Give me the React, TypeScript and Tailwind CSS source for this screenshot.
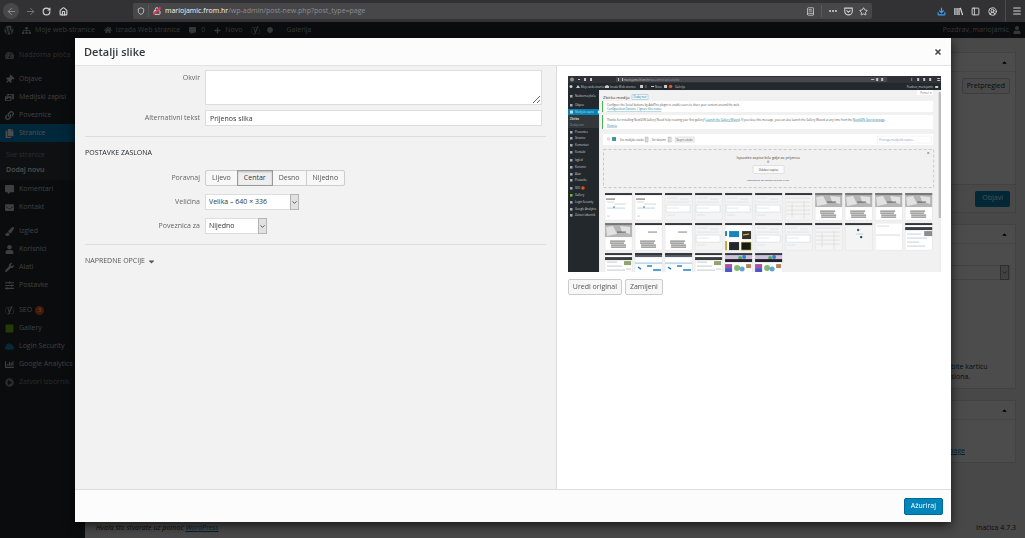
import React from "react";
import type { ReactNode } from "react";
import {
  ArrowLeft, ArrowRight, RotateCw, House, Shield, LockOpen, Ellipsis, Star, Download,
  Menu, PanelLeft, CircleUserRound, BookText, ChevronDown, X,
} from "lucide-react";
import {
  FaWordpress, FaHome, FaPlus, FaCommentAlt, FaTachometerAlt, FaThumbtack, FaPhotoVideo, FaLink, FaCopy,
  FaEnvelope, FaPaintBrush, FaUser, FaWrench, FaSlidersH, FaYoast, FaSquare, FaCloud, FaChartBar,
  FaPlayCircle, FaCircle, FaSitemap, FaCaretUp, FaCaretDown,
} from "react-icons/fa";

type Item = { label: string; icon: ReactNode; badge?: string };

function BrowserBar() {
  return (
    <header className="flex h-[22px] items-center bg-[#323234] px-[3px] text-[#d4d4d6]">
      <nav className="flex w-[130px] items-center gap-[6px]">
        <button aria-label="Natrag" className="flex size-4 items-center justify-center rounded-full bg-[#48484a] text-[#8f8f91]">
          <ArrowLeft size={11} />
        </button>
        <button aria-label="Naprijed" className="text-[#77777a]"><ArrowRight size={11} /></button>
        <button aria-label="Osvježi" className="mr-0.5"><RotateCw size={9} strokeWidth={3} /></button>
        <button aria-label="Početna"><House size={9} strokeWidth={3} /></button>
      </nav>
      <div className="flex h-4 min-w-0 flex-1 items-center rounded-[2px] bg-[#474749] px-1">
        <Shield size={8} strokeWidth={2.5} />
        <span className="mx-[3px] h-3 w-px bg-[#59595b]" />
        <span className="relative mr-1 flex size-[9px] items-center justify-center">
          <LockOpen size={8} strokeWidth={3} />
          <span className="absolute h-0.5 w-[10px] -rotate-45 bg-[#e0355a]" />
        </span>
        <p className="flex-1 truncate text-[7px] leading-4 text-[#8d8d8f]">
          <span className="text-[#f3f3f4]">mariojamic.from.hr</span>/wp-admin/post-new.php?post_type=page
        </p>
        <BookText size={9} strokeWidth={2} />
        <span className="ml-[6px] mr-[6px] h-3 w-px bg-[#59595b]" />
        <Ellipsis size={10} strokeWidth={3} />
        <svg viewBox="0 0 12 12" className="ml-[6px] size-[9px]" fill="none" stroke="currentColor" strokeWidth="1.4">
          <path d="M1 1.500h10v4a5 5 0 0 1-10 0zM3.500 4.500L6 7l2.500-2.500" />
        </svg>
        <Star size={9} strokeWidth={2.5} className="ml-[6px]" />
      </div>
      <div className="flex w-[150px] items-center justify-end gap-2">
        <Download size={9} strokeWidth={3} className="text-[#3f9ef5]" />
        <svg viewBox="0 0 10 10" className="size-[9px]" stroke="currentColor" strokeWidth="1.4" fill="none">
          <path d="M1 1v8M3.4 1v8M5.6 1v8M7 1l2.6 8" />
        </svg>
        <PanelLeft size={9} strokeWidth={2.5} />
        <CircleUserRound size={9} strokeWidth={2.5} />
        <span className="-mr-0.5 h-[22px] w-px bg-[#4c4c4e]" />
        <Menu size={10} strokeWidth={2.5} />
      </div>
    </header>
  );
}

function AdminBar() {
  return (
    <div className="flex h-4 items-center bg-[#23282d] px-1 text-[7px] leading-4 text-[#b4b9be]">
      <FaWordpress size={10} />
      <a href="#sites" className="ml-2 flex items-center gap-1"><FaSitemap size={9} />Moje web-stranice</a>
      <a href="#site" className="ml-[9px] flex items-center gap-1"><FaHome size={8} />Izrada Web stranice</a>
      <a href="#comments" className="ml-[9px] flex items-center gap-[5px]"><FaCommentAlt size={7} />0</a>
      <a href="#new" className="ml-[9px] flex items-center gap-1"><FaPlus size={7} />Novo</a>
      <FaYoast size={9} className="ml-[9px]" />
      <FaCircle size={6} className="ml-[7px]" />
      <a href="#gallery" className="ml-[13px]">Galerija</a>
      <a href="#profile" className="ml-auto flex items-center gap-1">Pozdrav, mariojamic <FaUser size={8} /></a>
    </div>
  );
}

const group1: Item[] = [
  { label: "Objave", icon: <FaThumbtack className="rotate-45" /> },
  { label: "Medijski zapisi", icon: <FaPhotoVideo /> },
  { label: "Poveznice", icon: <FaLink /> },
];
const group2: Item[] = [
  { label: "Komentari", icon: <FaCommentAlt /> },
  { label: "Kontakt", icon: <FaEnvelope /> },
];
const group3: Item[] = [
  { label: "Izgled", icon: <FaPaintBrush /> },
  { label: "Korisnici", icon: <FaUser /> },
  { label: "Alati", icon: <FaWrench /> },
  { label: "Postavke", icon: <FaSlidersH /> },
];
const group4: Item[] = [
  { label: "SEO", icon: <FaYoast />, badge: "3" },
  { label: "Gallery", icon: <FaSquare className="text-[#7ec225]" /> },
  { label: "Login Security", icon: <FaCloud className="text-[#118ab5]" /> },
  { label: "Google Analytics", icon: <FaChartBar /> },
];

function MenuItems({ items, className = "" }: { items: Item[]; className?: string }) {
  return (
    <ul className={className}>
      {items.map((it) => (
        <li key={it.label}>
          <a href="#menu" className="flex h-[18px] items-center gap-[5px] whitespace-nowrap pl-[5px]">
            <span className="flex w-[9px] justify-center text-[9px]">{it.icon}</span>
            {it.label}
            {it.badge && (
              <span className="-ml-0.5 flex size-[9px] items-center justify-center rounded-full bg-[#f0591a] text-[6px] text-white">
                {it.badge}
              </span>
            )}
          </a>
        </li>
      ))}
    </ul>
  );
}

function Sidebar() {
  return (
    <nav className="w-[85px] shrink-0 bg-[#23282d] pt-2 text-[7px] text-[#d0d3d6]">
      <MenuItems items={[{ label: "Nadzorna ploča", icon: <FaTachometerAlt /> }]} className="text-[#999da1]" />
      <MenuItems items={group1} className="mt-[6px]" />
      <a href="#pages" className="flex h-[18px] items-center gap-[5px] bg-[#0085c4] pl-[5px] text-white">
        <span className="flex w-[9px] justify-center text-[9px]"><FaCopy /></span>Stranice
      </a>
      <div className="bg-[#32373c] pb-[3px] pl-[6px] pt-[5px] leading-[15px]">
        <a href="#all" className="block text-[#92979c]">Sve stranice</a>
        <a href="#add" className="block font-semibold text-white">Dodaj novu</a>
      </div>
      <MenuItems items={group2} />
      <MenuItems items={group3} className="mt-[6px]" />
      <MenuItems items={group4} className="mt-[7px]" />
      <MenuItems items={[{ label: "Zatvori izbornik", icon: <FaPlayCircle /> }]} className="text-[#8a8f94]" />
    </nav>
  );
}

function MetaBox({ children, className }: { children: ReactNode; className: string }) {
  return (
    <section className={`flex flex-col border border-[#dcdcdc] bg-white ${className}`}>
      <div className="flex h-[19px] shrink-0 items-center justify-end border-b border-[#e8e8e8] pr-[7px]">
        <FaCaretUp size={7} className="text-black" />
      </div>
      {children}
    </section>
  );
}

function Background() {
  return (
    <div className="flex min-w-0 flex-1 flex-col bg-[#f1f1f1] pl-[11px] pr-[9px] text-[7px] text-[#23282d]">
      <aside className="flex w-[160px] flex-1 flex-col gap-[11px] self-end pt-[14px]">
        <MetaBox className="h-[161px]">
          <div className="flex flex-1 items-start justify-end pr-[5px] pt-[6px]">
            <button className="h-4 rounded-[2px] border border-[#ccc] bg-[#f7f7f7] px-1 leading-3">Pretpregled</button>
          </div>
          <div className="flex h-7 items-center justify-end border-t border-[#ddd] bg-[#f5f5f5] pr-[5px]">
            <button className="h-4 rounded-[2px] bg-[#0085ba] px-[7px] text-white">Objavi</button>
          </div>
        </MetaBox>
        <MetaBox className="h-[165px]">
          <div className="mr-[5px] mt-[21px] flex h-[15px] shrink-0 items-center justify-end border border-[#ddd]">
            <span className="flex h-[15px] w-[9px] items-center justify-center border border-[#999] bg-[#ddd]"><ChevronDown size={7} /></span>
          </div>
          <p className="mt-[82px] pl-[94px] leading-[10px]">bite karticu<br />slona.</p>
        </MetaBox>
        <MetaBox className="h-[63px]">
          <a href="#image" className="mt-[26px] pl-[92px] text-[#0073aa] underline">page</a>
        </MetaBox>
      </aside>
      <footer className="flex h-5 items-center justify-between">
        <p className="italic">Hvala što stvarate uz pomoć <a href="#wp" className="text-[#0073aa] underline">WordPress</a></p>
        <p>Inačica 4.7.3</p>
      </footer>
    </div>
  );
}

const miniMenu: [string, number][] = [
  ["Nadzorna ploča", 20], ["Objave", 29], ["Poveznice", 56], ["Stranice", 62], ["Komentari", 69],
  ["Kontakt", 76], ["Izgled", 84], ["Korisnici", 91], ["Alati", 98], ["Postavke", 104], ["SEO", 112],
  ["Gallery", 119], ["Login Security", 126], ["Google Analytics", 133], ["Zatvori izbornik", 139],
];

type Kind = "form" | "list" | "table" | "photo" | "doc" | "tiles" | "dots" | "split" | "gallery" | "blue" | "green" | "color";
const shelf: Kind[][] = [
  ["form", "form", "list", "list", "list", "list", "table", "photo", "photo", "photo", "photo"],
  ["photo", "doc", "doc", "list", "tiles", "list", "list", "table", "dots", "split", "gallery"],
  ["green", "blue", "blue", "green", "color", "color"],
];

function Tile({ kind, x, y }: { kind: Kind; x: number; y: number }) {
  return (
    <g transform={`translate(${x} ${y})`}>
      <rect width="27" height="27" fill={kind === "list" || kind === "table" || kind === "dots" ? "#f4f4f5" : "#fff"} stroke="#dedede" strokeWidth=".4" />
      {kind === "photo" && (
        <g>
          <rect width="27" height="14" fill="#b5b5b5" />
          <path d="M1 4l7-1 4 8-10 2zM15 3l10 1v7l-8-2z" fill="#e2e2e2" />
          <path d="M12 9h9" stroke="#444" strokeWidth=".8" />
        </g>
      )}
      {kind === "doc" && <path d="M13 9h9" stroke="#777" strokeWidth=".9" />}
      {(kind === "photo" || kind === "doc") && (
        <path d="M5 18h15M5 20h14M6 22h15M6 24h15" stroke="#888" strokeWidth="1.2" />
      )}
      {kind === "form" && (
        <g fill="none" strokeWidth=".6">
          <path d="M1 6h9" stroke="#666" strokeWidth="1" />
          <path d="M2 9h7M2 23h3M9 11h12" stroke="#bbb" />
          <path d="M2 15h18" stroke="#86bdd9" />
          <path d="M8 14h2" stroke="#31798e" strokeWidth="1" />
        </g>
      )}
      {kind === "list" && (
        <g stroke="#d4d8dc" strokeWidth=".6">
          <rect x="1" y="12" width="24" height="7" fill="#fff" />
          <path d="M2 5h10M2 9h22M2 15h12M2 22h8M15 6h8" />
        </g>
      )}
      {kind === "table" && <path d="M1 5h24M1 9h24M1 13h24M1 17h24M1 21h24M19 8v18M7 10v14" stroke="#d5d5d5" strokeWidth=".6" />}
      {kind === "tiles" && (
        <g>
          <rect x="4" y="8" width="10" height="6" fill="#1687bd" />
          <rect x="17" y="8" width="9" height="8" fill="#35332f" />
          <path d="M18 12l6-1" stroke="#f1ce38" />
          <rect x="4" y="19" width="10" height="8" fill="#23282d" />
          <rect x="16" y="19" width="10" height="8" fill="#171b16" stroke="#d5cd30" strokeWidth=".6" />
          <rect x="0" y="8" width="2" height="5" fill="#2c82a8" />
          <rect x="0" y="18" width="2" height="9" fill="#cda72b" />
        </g>
      )}
      {kind === "dots" && (
        <g><circle cx="13" cy="7" r="1.2" fill="#556" /><circle cx="16" cy="14" r="1.2" fill="#345" /><path d="M11 11h7" stroke="#84cbe4" strokeWidth=".6" /></g>
      )}
      {kind === "split" && <path d="M2 3h12M1 12h24" stroke="#c9c9c9" strokeWidth=".7" />}
      {kind === "gallery" && (
        <g>
          <rect y="4" width="27" height="3" fill="#3a3d42" />
          <rect x="19" y="8" width="8" height="5" fill="#8d8d8d" />
          <path d="M2 11h14M2 15h20M2 19h12M2 23h18" stroke="#a8bccb" strokeWidth=".7" />
        </g>
      )}
      {kind === "green" && (
        <g>
          <rect y="4" width="27" height="3" fill="#3a3d42" />
          <rect x="19" y="8" width="7" height="4" fill="#90a36e" />
          <path d="M2 9h10M2 13h15M2 17h18M21 16h5" stroke="#b5bdc4" strokeWidth=".8" />
        </g>
      )}
      {kind === "blue" && (
        <g>
          <rect width="27" height="4" fill="#59616b" />
          <path d="M0 10h27" stroke="#92bee0" />
          <path d="M3 14l3 2M12 13h5M18 17h8" stroke="#2581c4" strokeWidth="1.5" />
        </g>
      )}
      {kind === "color" && (
        <g>
          <rect y="1" width="27" height="5" fill="#cfc0dd" />
          <circle cx="15" cy="5" r="2" fill="#51a95e" /><circle cx="19" cy="4" r="2" fill="#357cd0" />
          <rect y="6" width="27" height="3" fill="#20212a" />
          <rect y="11" width="7" height="4" fill="#ab52a7" /><rect y="15" width="7" height="4" fill="#4b58c7" />
          <circle cx="12" cy="15" r="3" fill="#85b96d" /><circle cx="17" cy="16" r="2.5" fill="#5ba6d7" />
          <rect x="21" y="11" width="5" height="4" fill="#ae8562" />
        </g>
      )}
      {kind !== "split" && <rect width="27" height="2" fill={kind === "photo" ? "#77777a" : "#33363b"} />}
    </g>
  );
}

function Preview() {
  return (
    <svg viewBox="0 0 373 196" className="block w-full" role="img" aria-label="Zbirka medija" fontFamily="'Open Sans', sans-serif" fontSize="2.8">
      <rect width="373" height="196" fill="#f1f1f1" />
      <rect width="373" height="7" fill="#303136" />
      <rect x="48" y="1" width="271" height="5" fill="#47484d" />
      <circle cx="4" cy="3.5" r="2" fill="#909196" />
      <g fill="#c4c4c6">
        <path d="M10 3h2v1h-2zM16 2h2v3h-2zM22 2h2v3h-2zM50 2h1v3h-1zM54 2h1v3h-1zM303 3h3v1h-3zM308 2h2v3h-2zM313 2h2v3h-2zM349 2h2v3h-2zM355 2h2v3h-2zM361 2h2v3h-2zM369 2h3v1h-3zM369 4h3v1h-3z" />
        <path d="M343 2h1v3h-1z" fill="#3f9ef5" />
        <text x="56" y="4.6">mariojamic.from.hr<tspan fill="#929297">/wp-admin/upload.php</tspan></text>
      </g>
      <rect y="7" width="373" height="7" fill="#23282d" />
      <rect y="14" width="31" height="182" fill="#23282d" />
      <g fill="#c8ccd0">
        <circle cx="3" cy="10.5" r="1.5" />
        <path d="M8 12l2-3 2 3zM37 12v-2l2-1 2 1v2zM72 9h3v3h-3zM83 10h3v1h-3zM96 9h3v3h-3z" />
        <text x="13" y="11.6">Moje web-stranice</text>
        <text x="42" y="11.6">Izrada Web stranice</text>
        <text x="77" y="11.6">0</text>
        <text x="87" y="11.6">Novo</text>
        <circle cx="102.5" cy="10.5" r="1.8" fill="#e65025" />
        <text x="107" y="11.6">Galerija</text>
        <text x="365" y="11.6" textAnchor="end">Pozdrav, mariojamic</text>
        <path d="M367 12v-2h3v2z" />
      </g>
      <rect y="33" width="31" height="6" fill="#0085ba" />
      <path d="M31 34l-1.5 2 1.5 2z" fill="#f1f1f1" />
      <rect y="39" width="31" height="13" fill="#32373c" />
      <g fill="#d0d3d6">
        <rect x="2" y="34.5" width="3" height="3" />
        <text x="7" y="37.2">Medijski zapisi</text>
        <text x="2" y="44" fontWeight="700">Zbirka</text>
        <text x="2" y="49.5" fill="#8f979d">Dodaj novi</text>
        {miniMenu.map(([label, y]) => (
          <g key={label}>
            <rect x="2" y={y - 1} width="2.5" height="2.5" fill={label === "Gallery" ? "#80bd30" : "#a6abb0"} />
            <text x="7" y={y + 1}>{label}</text>
          </g>
        ))}
        <circle cx="15" cy="112" r="1.7" fill="#e65025" />
      </g>
      <text x="35" y="22.5" fontSize="4.2" fill="#333">Zbirka medija</text>
      <rect x="64" y="18.5" width="16" height="5" rx=".6" fill="#f7f7f7" stroke="#87b5ca" strokeWidth=".5" />
      <text x="72" y="22" fontSize="2.6" fill="#0073aa" textAnchor="middle">Dodaj novi</text>
      <rect x="349" y="14" width="16" height="5" fill="#fff" />
      <text x="352" y="17.5" fill="#777">Pomoć ▾</text>
      <g fill="#fff"><rect x="35" y="25" width="330" height="11" /><rect x="35" y="39" width="330" height="14" /><rect x="35" y="58" width="330" height="11" /></g>
      <g fill="#46b450"><rect x="34" y="25" width="1" height="11" /><rect x="34" y="39" width="1" height="14" /></g>
      <g fill="#555">
        <text x="39" y="29.5">Configure the Social buttons by AddThis plugin to enable users to share your content around the web.</text>
        <text x="39" y="34" fill="#247c96" textDecoration="underline">Configuration Options | Ignore this notice</text>
        <text x="39" y="44.5">
          Thanks for installing NextGEN Gallery! Need help creating your first gallery?{" "}
          <tspan fill="#247c96" textDecoration="underline">Launch the Gallery Wizard</tspan>
          . If you close this message, you can also launch the Gallery Wizard at any time from the{" "}
          <tspan fill="#247c96" textDecoration="underline">NextGEN Overview page</tspan>.
        </text>
        <text x="39" y="50.5" fill="#247c96" textDecoration="underline">Dismiss</text>
        <rect x="39" y="61.5" width="3" height="3" fill="#ddd" /><rect x="44" y="61" width="4" height="4" fill="#47929e" />
        <text x="52" y="64.5" fontSize="2.6">Sve medijske stavke</text><rect x="77" y="61" width="3" height="5" fill="#ddd" stroke="#888" strokeWidth=".3" />
        <text x="84" y="64.5">Svi datumi</text><rect x="100" y="61" width="3" height="5" fill="#ddd" stroke="#888" strokeWidth=".3" />
        <rect x="107" y="61" width="19" height="5" fill="#f7f7f7" stroke="#bbb" strokeWidth=".4" />
        <text x="116.5" y="64.5" fontSize="2.6" textAnchor="middle">Skupni odabir</text>
        <rect x="309" y="60" width="54" height="7" fill="none" stroke="#e5e5e5" strokeWidth=".4" />
        <text x="311" y="64.5" fill="#999">Pretraga medijskih zapisa...</text>
      </g>
      <rect x="35.5" y="73.5" width="330" height="38" fill="none" stroke="#c2c5c7" strokeWidth=".9" strokeDasharray="3 2" />
      <g textAnchor="middle" fill="#444">
        <text x="200" y="82.5" fontSize="3.8">Ispustite zapise bilo gdje za prijenos</text>
        <text x="200" y="87">ili</text>
        <rect x="185" y="89.5" width="31" height="8" rx=".8" fill="#fafafa" stroke="#ccc" strokeWidth=".5" />
        <text x="200.5" y="94.5">Odaberi zapise</text>
        <text x="200" y="105" fontSize="2.4">Maksimalna dozvoljena veličina: 2 MB.</text>
        <text x="360" y="79" fontSize="5">×</text>
      </g>
      {shelf.map((row, r) => row.map((kind, c) => <Tile key={`${r}-${c}`} kind={kind} x={37 + c * 30} y={117 + r * 30} />))}
      <rect x="370" y="14" width="3" height="182" fill="#eee" />
      <rect x="370.5" y="16" width="2.5" height="126" fill="#bcbcbc" />
    </svg>
  );
}

const rowLabel = "w-[115px] shrink-0 pt-[3px] text-right text-[7px] leading-[10px] text-[#666]";

function Row({ label, id, children }: { label: string; id?: string; children: ReactNode }) {
  return (
    <div className="flex gap-[5px] pr-1">
      {id ? <label htmlFor={id} className={rowLabel}>{label}</label> : <span className={rowLabel}>{label}</span>}
      {children}
    </div>
  );
}

function Select({ id, option, className }: { id: string; option: string; className: string }) {
  return (
    <div className={`relative h-4 ${className}`}>
      <select id={id} className="block h-4 w-full appearance-none border border-[#ddd] bg-white pl-[3px] text-[7px] leading-[14px] text-[#32373c]">
        <option>{option}</option>
      </select>
      <span className="pointer-events-none absolute inset-y-0 right-0 flex w-[9px] items-center justify-center border border-[#b5b5b5] bg-[#e1e1e1]">
        <ChevronDown size={7} strokeWidth={2} />
      </span>
    </div>
  );
}

function AlignButton({ children, active, className = "" }: { children: string; active?: boolean; className?: string }) {
  return (
    <button
      type="button"
      aria-pressed={!!active}
      className={`-ml-px h-4 border px-[6px] first:ml-0 ${active ? "relative border-[#999] bg-[#eee] pt-px text-[#32373c] shadow-[inset_0_1px_2px_#bbb]" : "border-[#ccc] bg-[#f7f7f7] text-[#555]"} ${className}`}
    >
      {children}
    </button>
  );
}

function Dialog() {
  return (
    <div role="dialog" aria-labelledby="dialog-title" className="fixed bottom-4 left-[75px] right-[74px] top-[38px] flex flex-col bg-[#fcfcfc] shadow-[0_3px_10px_rgba(0,0,0,0.7)]">
      <div className="flex h-7 shrink-0 items-center justify-between border-b border-[#e2e2e2] pl-[9px] pr-[9px]">
        <h1 id="dialog-title" className="text-[11px] font-semibold leading-4 text-[#32373c]">Detalji slike</h1>
        <button aria-label="Zatvori" className="text-[#444]"><X size={8} strokeWidth={5} /></button>
      </div>
      <div className="flex min-h-0 flex-1">
        <form className="w-[55%] overflow-hidden border-r border-[#ddd] bg-[#f2f2f2] pl-[10px] pr-[10px] pt-1">
          <Row label="Okvir" id="caption">
            <textarea id="caption" className="h-[35px] min-w-0 flex-1 resize-y border border-[#ddd] bg-white text-[7px]" />
          </Row>
          <div className="mt-[5px]">
            <Row label="Alternativni tekst" id="alt">
              <input id="alt" defaultValue="Prijenos slika" className="h-4 min-w-0 flex-1 border border-[#ddd] bg-white px-1 text-[7px] text-[#32373c]" />
            </Row>
          </div>
          <hr className="mt-[10px] border-[#ddd]" />
          <h2 className="mt-[11px] text-[7px] font-medium uppercase leading-[10px] text-[#23282d]">Postavke zaslona</h2>
          <div className="mt-3 flex flex-col gap-2">
            <Row label="Poravnaj">
              <div role="group" aria-label="Poravnaj" className="flex text-[7px]">
                <AlignButton className="rounded-l-[2px]">Lijevo</AlignButton>
                <AlignButton active>Centar</AlignButton>
                <AlignButton>Desno</AlignButton>
                <AlignButton className="rounded-r-[2px]">Nijedno</AlignButton>
              </div>
            </Row>
            <Row label="Veličina" id="size"><Select id="size" option="Velika – 640 × 336" className="w-[94px]" /></Row>
            <Row label="Poveznica za" id="link"><Select id="link" option="Nijedno" className="w-[62px]" /></Row>
          </div>
          <hr className="mt-[10px] border-[#ddd]" />
          <button type="button" className="mt-[11px] flex items-center gap-0.5 text-[7px] uppercase leading-[10px] text-[#555]">
            Napredne opcije <FaCaretDown size={9} />
          </button>
        </form>
        <section className="min-w-0 flex-1 bg-white pl-[11px] pr-[10px] pt-[10px]">
          <Preview />
          <div className="mt-[7px] flex gap-[3px] text-[7px] text-[#555]">
            <button className="h-4 rounded-[2px] border border-[#ccc] bg-[#f7f7f7] px-1">Uredi original</button>
            <button className="h-4 rounded-[2px] border border-[#ccc] bg-[#f7f7f7] px-1">Zamijeni</button>
          </div>
        </section>
      </div>
      <div className="flex h-[33px] shrink-0 items-center justify-end border-t border-[#ddd] pr-2">
        <button className="h-[17px] rounded-[2px] border border-[#006799] bg-[#0085ba] px-[6px] text-[7px] text-white">Ažuriraj</button>
      </div>
    </div>
  );
}

export default function App() {
  return (
    <div className="flex min-h-screen flex-col font-['Open_Sans',sans-serif]">
      <BrowserBar />
      <div className="relative flex flex-1 flex-col">
        <AdminBar />
        <div className="flex flex-1">
          <Sidebar />
          <Background />
        </div>
        <div className="absolute inset-0 bg-black/70" />
      </div>
      <Dialog />
    </div>
  );
}
